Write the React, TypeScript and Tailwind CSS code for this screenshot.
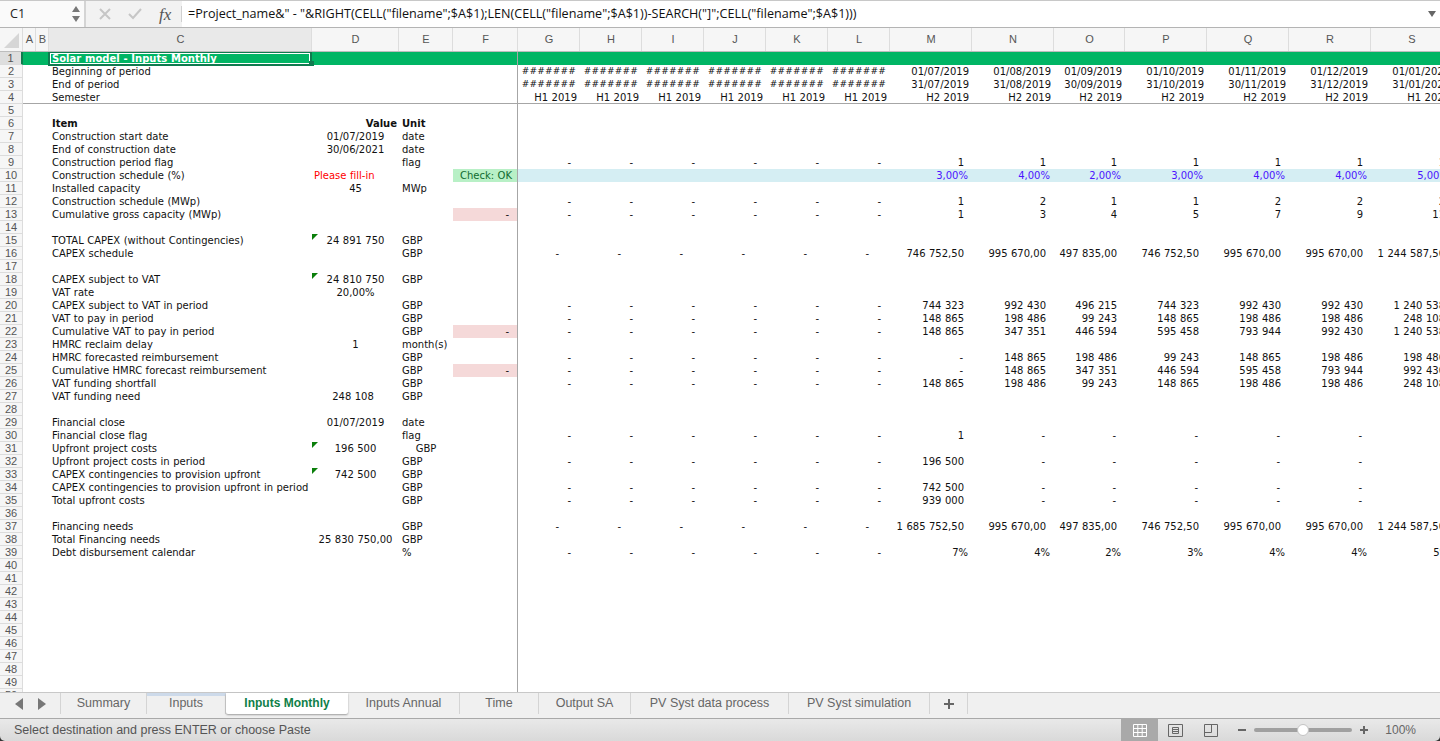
import React from "react";

type Row = {
  n: number;
  c?: string;
  d?: string;
  dAlign?: string;
  tri?: boolean;
  e?: string;
  eCenter?: boolean;
  f?: "check" | "pink";
  early?: string[];
  late?: string[];
  pad?: string;
  earlyPad?: string;
  bold?: boolean;
  blue?: boolean;
  band?: boolean;
  hashes?: boolean;
};

const TEMPLATE =
  "grid h-[13px] grid-cols-[23px_13px_13px_263px_87px_54px_65px_62px_62px_62px_62px_62px_62px_82px_82px_71px_82px_82px_82px_82px]";

const dashes = Array(6).fill("-");
const h1 = Array(6).fill("H1 2019");
const hashes = Array(6).fill("#######");
const dash6 = (first: string) => [first, "-", "-", "-", "-", "-", "-"];

const capexSched = ["746 752,50", "995 670,00", "497 835,00", "746 752,50", "995 670,00", "995 670,00", "1 244 587,50"];

const rows: Row[] = [
  { n: 2, c: "Beginning of period", early: hashes, hashes: true, pad: "pr-[3px]", late: ["01/07/2019", "01/08/2019", "01/09/2019", "01/10/2019", "01/11/2019", "01/12/2019", "01/01/2020"] },
  { n: 3, c: "End of period", early: hashes, hashes: true, pad: "pr-[3px]", late: ["31/07/2019", "31/08/2019", "30/09/2019", "31/10/2019", "30/11/2019", "31/12/2019", "31/01/2020"] },
  { n: 4, c: "Semester", early: h1, earlyPad: "pr-[3px]", pad: "pr-[3px]", late: ["H2 2019", "H2 2019", "H2 2019", "H2 2019", "H2 2019", "H2 2019", "H1 2020"] },
  { n: 5 },
  { n: 6, c: "Item", d: "Value", dAlign: "text-right pr-[2px]", e: "Unit", bold: true },
  { n: 7, c: "Construction start date", d: "01/07/2019", e: "date" },
  { n: 8, c: "End of construction date", d: "30/06/2021", e: "date" },
  { n: 9, c: "Construction period flag", e: "flag", early: dashes, late: ["1", "1", "1", "1", "1", "1", "1"] },
  { n: 10, c: "Construction schedule (%)", d: "Please fill-in", dAlign: "text-left pl-[2px] text-[#ff0000]", f: "check", band: true, blue: true, pad: "pr-[4px]", late: ["3,00%", "4,00%", "2,00%", "3,00%", "4,00%", "4,00%", "5,00%"] },
  { n: 11, c: "Installed capacity", d: "45", e: "MWp" },
  { n: 12, c: "Construction schedule (MWp)", early: dashes, late: ["1", "2", "1", "1", "2", "2", "2"] },
  { n: 13, c: "Cumulative gross capacity (MWp)", f: "pink", early: dashes, late: ["1", "3", "4", "5", "7", "9", "11"] },
  { n: 14 },
  { n: 15, c: "TOTAL CAPEX (without Contingencies)", d: "24 891 750", tri: true, e: "GBP" },
  { n: 16, c: "CAPEX schedule", e: "GBP", early: dashes, earlyPad: "pr-[21px]", late: capexSched },
  { n: 17 },
  { n: 18, c: "CAPEX subject to VAT", d: "24 810 750", tri: true, e: "GBP" },
  { n: 19, c: "VAT rate", d: "20,00%" },
  { n: 20, c: "CAPEX subject to VAT in period", e: "GBP", early: dashes, late: ["744 323", "992 430", "496 215", "744 323", "992 430", "992 430", "1 240 538"] },
  { n: 21, c: "VAT to pay in period", e: "GBP", early: dashes, late: ["148 865", "198 486", "99 243", "148 865", "198 486", "198 486", "248 108"] },
  { n: 22, c: "Cumulative VAT to pay in period", e: "GBP", f: "pink", early: dashes, late: ["148 865", "347 351", "446 594", "595 458", "793 944", "992 430", "1 240 538"] },
  { n: 23, c: "HMRC reclaim delay", d: "1", e: "month(s)" },
  { n: 24, c: "HMRC forecasted reimbursement", e: "GBP", early: dashes, late: ["-", "148 865", "198 486", "99 243", "148 865", "198 486", "198 486"] },
  { n: 25, c: "Cumulative HMRC forecast reimbursement", e: "GBP", f: "pink", early: dashes, late: ["-", "148 865", "347 351", "446 594", "595 458", "793 944", "992 430"] },
  { n: 26, c: "VAT funding shortfall", e: "GBP", early: dashes, late: ["148 865", "198 486", "99 243", "148 865", "198 486", "198 486", "248 108"] },
  { n: 27, c: "VAT funding need", d: "248 108", dAlign: "text-center pr-[5px]", e: "GBP" },
  { n: 28 },
  { n: 29, c: "Financial close", d: "01/07/2019", e: "date" },
  { n: 30, c: "Financial close flag", e: "flag", early: dashes, late: dash6("1") },
  { n: 31, c: "Upfront project costs", d: "196 500", tri: true, e: "GBP", eCenter: true },
  { n: 32, c: "Upfront project costs in period", e: "GBP", early: dashes, late: dash6("196 500") },
  { n: 33, c: "CAPEX contingencies to provision upfront", d: "742 500", tri: true, e: "GBP" },
  { n: 34, c: "CAPEX contingencies to provision upfront in period", e: "GBP", early: dashes, late: dash6("742 500") },
  { n: 35, c: "Total upfront costs", e: "GBP", early: dashes, late: dash6("939 000") },
  { n: 36 },
  { n: 37, c: "Financing needs", e: "GBP", early: dashes, earlyPad: "pr-[21px]", late: ["1 685 752,50", ...capexSched.slice(1)] },
  { n: 38, c: "Total Financing needs", d: "25 830 750,00", e: "GBP" },
  { n: 39, c: "Debt disbursement calendar", e: "%", early: dashes, pad: "pr-[4px]", late: ["7%", "4%", "2%", "3%", "4%", "4%", "5%"] },
  ...Array.from({ length: 11 }, (_, i) => ({ n: 40 + i })),
];

const columns = ["A", "B", "C", "D", "E", "F", "G", "H", "I", "J", "K", "L", "M", "N", "O", "P", "Q", "R", "S"];

function RowHead({ n, active }: { n: number; active?: boolean }) {
  return (
    <div
      className={`border-b border-r border-[#dcdcdc] text-center [font-family:'Liberation_Sans',sans-serif] text-[11px] leading-[12px] text-[#555] ${
        active ? "border-r-2 border-r-[#0f7b4f] bg-[#dedede]" : "bg-[#f6f6f6]"
      }`}
    >
      {n}
    </div>
  );
}

function SheetRow({ row }: { row: Row }) {
  const early = row.early ?? Array(6).fill("");
  const late = row.late ?? Array(7).fill("");
  const frozenEdge = row.n === 4 ? "border-b border-[#a6a6a6]" : "";
  const valueColor = row.blue ? "text-[#4b14ff]" : "";
  return (
    <div className={`${TEMPLATE} ${frozenEdge}`}>
      <RowHead n={row.n} />
      <div />
      <div />
      <div className={`whitespace-nowrap pl-[3px] ${row.bold ? "font-bold" : ""}`}>{row.c}</div>
      <div className={`relative whitespace-nowrap ${row.dAlign ?? "text-center"} ${row.bold ? "font-bold" : ""}`}>
        {row.tri && (
          <span className="absolute left-0 top-0 h-0 w-0 border-r-[6px] border-t-[6px] border-r-transparent border-t-[#0b7f0b]" />
        )}
        {row.d}
      </div>
      <div className={`whitespace-nowrap ${row.eCenter ? "text-center" : "pl-[3px]"} ${row.bold ? "font-bold" : ""}`}>
        {row.e}
      </div>
      <div
        className={`border-r border-r-[#a6a6a6] ${
          row.f === "check"
            ? "bg-[#b8f0c6] pl-[2px] text-center text-[#0f6b2f]"
            : row.f === "pink"
              ? "bg-[#f5d9d9] pr-[8px] text-right"
              : ""
        }`}
      >
        {row.f === "check" ? "Check: OK" : row.f === "pink" ? "-" : ""}
      </div>
      {early.map((v, i) => (
        <div
          key={i}
          className={`whitespace-nowrap text-right ${
            row.hashes ? "pr-[4px] text-[9px] tracking-[0.2px]" : (row.earlyPad ?? "pr-[9px]")
          } ${row.band ? "bg-[#d5eef3]" : ""}`}
        >
          {v}
        </div>
      ))}
      {late.map((v, i) => (
        <div
          key={i}
          className={`whitespace-nowrap text-right ${
            v === "-" ? "pr-[9px]" : (row.pad ?? "pr-[8px]")
          } ${valueColor} ${row.band ? "bg-[#d5eef3]" : ""}`}
        >
          {v}
        </div>
      ))}
    </div>
  );
}

function FormulaBar() {
  return (
    <div className="flex h-[28px] border-b border-t border-b-[#b4b4b4] border-t-[#c8c8c8] bg-[#f2f2f2]">
      <div className="flex w-[86px] items-center border-r-2 border-[#d4d4d4] bg-[#fafafa]">
        <span className="w-[71px] pl-[10px] [font-family:'Open_Sans',sans-serif] text-[12.6px] text-[#222]">C1</span>
        <svg width="10" height="18" viewBox="0 0 10 18" className="fill-[#777]">
          <path d="M5 1 9 7H1zM5 17 1 11h8z" />
        </svg>
      </div>
      <div className="flex w-[95px] items-center">
        <svg width="12" height="12" viewBox="0 0 12 12" className="ml-[13px] stroke-[#c6c6c6]" strokeWidth="2" fill="none">
          <path d="M1 1l10 10M11 1 1 11" />
        </svg>
        <svg width="14" height="12" viewBox="0 0 14 12" className="ml-[17px] stroke-[#c6c6c6]" strokeWidth="2" fill="none">
          <path d="M1 6l4 4 8-9" />
        </svg>
        <span className="ml-[17px] [font-family:'Liberation_Serif',serif] text-[17px] italic leading-none text-[#555]">fx</span>
      </div>
      <div className="my-[5px] w-px bg-[#d0d0d0]" />
      <div className="flex flex-1 items-center justify-between bg-white pl-[6px] pr-[4px]">
        <span className="whitespace-nowrap [font-family:'Open_Sans',sans-serif] text-[12.6px] text-[#111]">
          =Project_name&amp;" - "&amp;RIGHT(CELL("filename";$A$1);LEN(CELL("filename";$A$1))-SEARCH("]";CELL("filename";$A$1)))
        </span>
        <svg width="8" height="6" viewBox="0 0 8 6" className="fill-[#666]">
          <path d="M0 0h8L4 6z" />
        </svg>
      </div>
    </div>
  );
}

function ColumnHeaders() {
  return (
    <div className={`${TEMPLATE} !h-[24px] border-b border-[#bdbdbd] bg-[#f6f6f6]`}>
      <div className="relative border-r border-[#dcdcdc]">
        <span className="absolute bottom-[3px] right-[3px] h-0 w-0 border-b-[15px] border-l-[15px] border-b-[#d6d6d6] border-l-transparent" />
      </div>
      {columns.map((c) => (
        <div
          key={c}
          className={`border-r border-[#dddddd] pl-px text-center [font-family:'Liberation_Sans',sans-serif] text-[11px] leading-[23px] text-[#555] ${
            c === "C" ? "bg-[#e9e9e9]" : ""
          }`}
        >
          {c}
        </div>
      ))}
    </div>
  );
}

const tabs = [
  { name: "Summary", w: "w-[86px]" },
  { name: "Inputs", w: "w-[79px]", mark: true },
  { name: "Inputs Monthly", w: "w-[122px]", active: true },
  { name: "Inputs Annual", w: "w-[112px]" },
  { name: "Time", w: "w-[79px]" },
  { name: "Output SA", w: "w-[92px]" },
  { name: "PV Syst data process", w: "w-[158px]" },
  { name: "PV Syst simulation", w: "w-[141px]" },
];

function TabBar() {
  return (
    <div className="flex h-[26px] border-t border-[#c8c8c8] bg-[#f0f0f0] [font-family:'Liberation_Sans',sans-serif] text-[12.5px] text-[#666]">
      <div className="flex h-[21px] w-[61px] items-center border-r border-[#d4d4d4] pl-[15px]">
        <svg width="8" height="12" viewBox="0 0 8 12" className="fill-[#777]">
          <path d="M8 0v12L0 6z" />
        </svg>
        <svg width="8" height="12" viewBox="0 0 8 12" className="ml-[15px] fill-[#777]">
          <path d="M0 0v12l8-6z" />
        </svg>
      </div>
      {tabs.map((t) =>
        t.active ? (
          <div
            key={t.name}
            className={`${t.w} h-[21px] rounded-b-[2px] bg-white text-center text-[12px] font-bold leading-[20px] text-[#0f8048] shadow-[0_1px_2px_rgba(0,0,0,0.35)]`}
          >
            {t.name}
          </div>
        ) : (
          <div
            key={t.name}
            className={`${t.w} h-[21px] border-r border-[#d4d4d4] text-center ${
              t.mark ? "border-t-[3px] border-t-[#cddaea] leading-[14px]" : "leading-[20px]"
            }`}
          >
            {t.name}
          </div>
        ),
      )}
      <div className="flex h-[21px] w-[38px] items-center justify-center border-r border-[#d4d4d4]">
        <svg width="12" height="12" viewBox="0 0 12 12" className="stroke-[#666]" strokeWidth="2">
          <path d="M6 1v10M1 6h10" />
        </svg>
      </div>
    </div>
  );
}

function StatusBar() {
  return (
    <div className="flex h-[23px] items-stretch justify-between rounded-b-[5px] border-t border-[#a9a9a9] bg-gradient-to-b from-[#e9e9e9] to-[#d9d9d9] [font-family:'Liberation_Sans',sans-serif] text-[12.5px] text-[#555]">
      <div className="flex items-center pl-[14px]">Select destination and press ENTER or choose Paste</div>
      <div className="flex items-center">
        <div className="flex h-full w-[37px] items-center justify-center bg-[#a9a9a9]">
          <svg width="14" height="13" viewBox="0 0 14 13" className="stroke-white" fill="none">
            <path d="M.5.5h13v12H.5zM.5 4.5h13M.5 8.5h13M4.8.5v12M9.2.5v12" />
          </svg>
        </div>
        <svg width="15" height="13" viewBox="0 0 15 13" className="ml-[10px] stroke-[#666]" fill="none">
          <path d="M.5.5h14v12H.5zM4.5 3.5h6v6h-6zM4.5 5.5h6M4.5 7.5h6" />
        </svg>
        <svg width="14" height="13" viewBox="0 0 14 13" className="ml-[21px] stroke-[#666]" fill="none">
          <path d="M.5.5h13v12H.5zM.5 8.5h7M7.5.5v8" />
        </svg>
        <div className="ml-[20px] h-[2px] w-[8px] bg-[#666]" />
        <div className="relative ml-[8px] h-[4px] w-[98px] rounded-full bg-[#a0a0a0]">
          <span className="absolute left-[43px] top-[-4px] h-[12px] w-[12px] rounded-full border border-[#c4c4c4] bg-white" />
        </div>
        <svg width="8" height="8" viewBox="0 0 8 8" className="ml-[8px] stroke-[#666]" strokeWidth="2">
          <path d="M4 0v8M0 4h8" />
        </svg>
        <span className="ml-[17px] mr-[24px] text-[12px] text-[#666]">100%</span>
      </div>
    </div>
  );
}

export default function App() {
  return (
    <div className="flex h-[741px] w-[1440px] flex-col overflow-hidden bg-[#333]">
      <FormulaBar />
      <ColumnHeaders />
      <div className="h-[640px] overflow-hidden bg-white [font-family:'DejaVu_Sans',sans-serif] text-[10px] leading-[13px] text-[#111] [font-variant-ligatures:none] [word-spacing:0.3px]">
        {/* Title row with the selected cell */}
        <div className={`${TEMPLATE} bg-[#00b564]`}>
          <RowHead n={1} active />
          <div />
          <div />
          <div className="relative whitespace-nowrap pl-[3px] font-bold text-white">
            Solar model - Inputs Monthly
            <span className="absolute -left-px -top-px h-[15px] w-[264px] border-2 border-[#0f7b4f]">
              <span className="block h-full w-full border border-white" />
            </span>
            <span className="absolute bottom-[-1px] right-[-2px] h-[5px] w-[5px] bg-[#0f7b4f]" />
          </div>
          <div className="col-span-3 border-r border-r-[#a6a6a6]" />
        </div>
        {rows.map((r) => (
          <SheetRow key={r.n} row={r} />
        ))}
      </div>
      <TabBar />
      <StatusBar />
    </div>
  );
}
